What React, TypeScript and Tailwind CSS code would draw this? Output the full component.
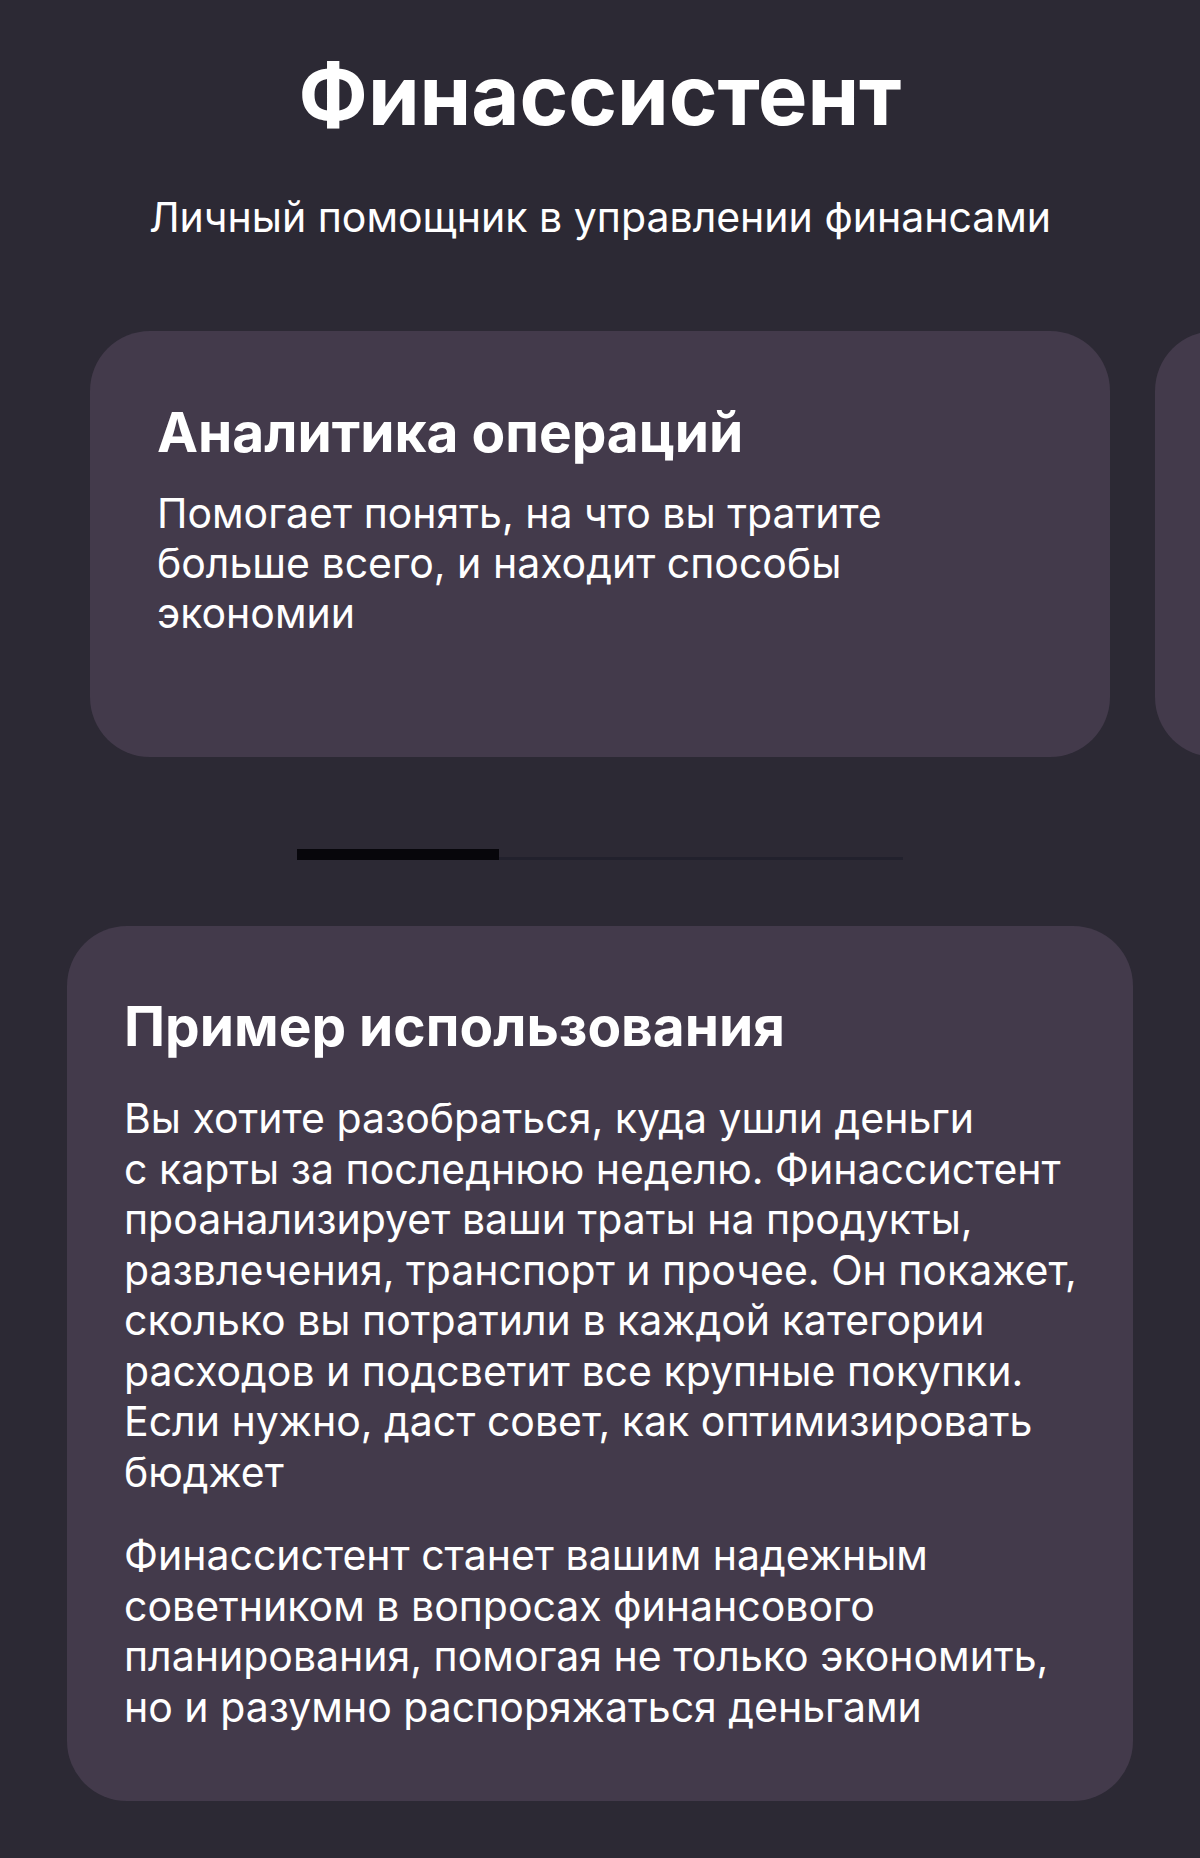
import React from "react";

type Feature = {
  id: number;
  title: string;
  lines: string[];
};

const features: Feature[] = [
  {
    id: 1,
    title: "Аналитика операций",
    lines: [
      "Помогает понять, на что вы тратите",
      "больше всего, и находит способы",
      "экономии",
    ],
  },
  {
    id: 2,
    title: "Планирование бюджета",
    lines: [
      "Составляет план расходов на месяц",
      "и напоминает о регулярных",
      "платежах",
    ],
  },
];

const example: string[][] = [
  [
    "Вы хотите разобраться, куда ушли деньги",
    "с карты за последнюю неделю. Финассистент",
    "проанализирует ваши траты на продукты,",
    "развлечения, транспорт и прочее. Он покажет,",
    "сколько вы потратили в каждой категории",
    "расходов и подсветит все крупные покупки.",
    "Если нужно, даст совет, как оптимизировать",
    "бюджет",
  ],
  [
    "Финассистент станет вашим надежным",
    "советником в вопросах финансового",
    "планирования, помогая не только экономить,",
    "но и разумно распоряжаться деньгами",
  ],
];

const Lines: React.FC<{ lines: string[] }> = ({ lines }) => (
  <>
    {lines.map((line, i) => (
      <span key={i} className="block whitespace-nowrap">
        {line}
      </span>
    ))}
  </>
);

const App: React.FC = () => {
  const active = 0;

  return (
    <div
      className="min-h-screen bg-[#2c2934] pb-[58px] text-white"
      style={{ fontFamily: "Inter, 'Noto Sans', sans-serif" }}
    >
      <header className="pt-[54px] text-center">
        <h1 className="text-[83px] font-bold leading-none">Финассистент</h1>
        <p className="mt-[55px] text-[41px] leading-[50px]">
          Личный помощник в управлении финансами
        </p>
      </header>

      {/* карусель возможностей */}
      <div className="mt-[89px] flex gap-[45px] overflow-hidden pl-[90px]">
        {features.map(({ id, title, lines }) => (
          <div
            key={id}
            className="h-[426px] w-[1020px] shrink-0 rounded-[60px] bg-[#433a4b] pl-[67px] pt-[66px]"
          >
            <h2 className="text-[55px] font-bold leading-[70px]">{title}</h2>
            <p className="mt-[21px] text-[41px] leading-[50px]">
              <Lines lines={lines} />
            </p>
          </div>
        ))}
      </div>

      <div className="mx-auto mt-[92px] flex h-[11px] w-[606px] items-end">
        {features.concat(features[0]).map((f, i) => (
          <div
            key={i}
            className={
              i === active
                ? "h-[11px] flex-1 bg-[#07060b]"
                : "h-[3px] flex-1 bg-[#22212d]"
            }
          />
        ))}
      </div>

      <section className="mx-[67px] mt-[66px] rounded-[60px] bg-[#433a4b] px-[57px] pb-[69px] pt-[65px]">
        <h2 className="text-[55px] font-bold leading-[70px]">
          Пример использования
        </h2>
        {example.map((para, i) => (
          <p
            key={i}
            className={`text-[41px] leading-[50.5px] ${i === 0 ? "mt-[32px]" : "mt-[33px]"}`}
          >
            <Lines lines={para} />
          </p>
        ))}
      </section>
    </div>
  );
};

export default App;
